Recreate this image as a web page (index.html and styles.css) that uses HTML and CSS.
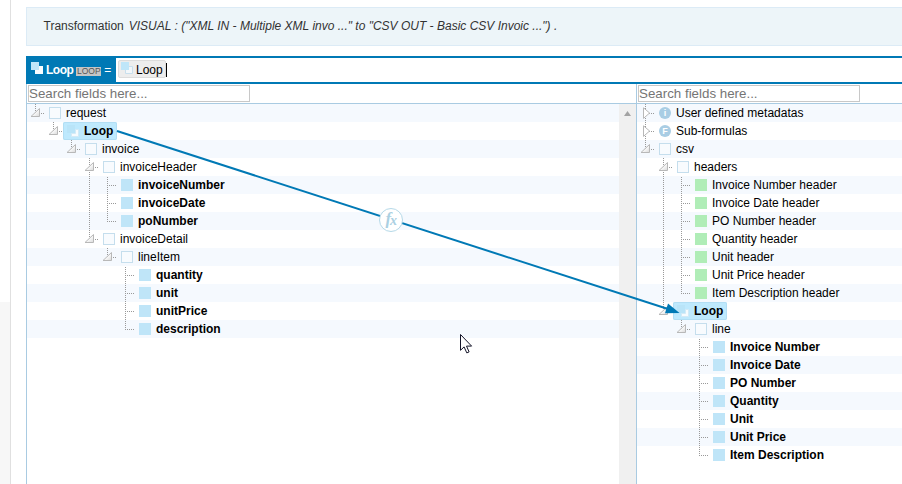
FILE: index.html
```html
<!DOCTYPE html>
<html lang="en">
<head>
<meta charset="utf-8">
<title>Transformation</title>
<link rel="stylesheet" href="styles.css">
</head>
<body>
<svg class="defs" width="0" height="0" aria-hidden="true">
  <defs>
    <linearGradient id="tri" x1="0" y1="0" x2="1" y2="1"><stop offset=".45" stop-color="#fff"/><stop offset="1" stop-color="#d8d8d8"/></linearGradient>
    <symbol id="open" viewBox="0 0 12 12"><path d="M1 9.500 9.500 1.500V9.500Z" fill="url(#tri)" stroke="#b8b8b8"/></symbol>
    <symbol id="closed" viewBox="0 0 12 12"><path d="M3.500 .8 9.600 6 3.500 11.400Z" fill="#fff" stroke="#b8b8b8"/></symbol>
    <symbol id="loop" viewBox="0 0 12 12"><path d="M4 4H12V12H4Z" fill="#fafdff"/><path d="M0 0H8V8H0Z" fill="#bfe6f9"/></symbol>
    <symbol id="loop-outline" viewBox="0 0 12 12"><path d="M4.500 4.500h7v7h-7z" fill="#f3f7fa" stroke="#c8dfed"/><path d="M0 0H8V8H0Z" fill="#bfe6f9"/></symbol>
    <symbol id="loop-soft" viewBox="0 0 12 12"><path d="M8.500 4.500h3v7h-7v-3h4z" fill="#f6fbfe" stroke="#d3eaf6"/><path d="M0 0H8V8H0Z" fill="#b9e4f8"/></symbol>
  </defs>
</svg>
<div class="app">
  <aside class="rail"></aside>
  <main class="main">
    <div class="notice"><span class="notice-label">Transformation</span><em>VISUAL : ("XML IN - Multiple XML invo ..." to "CSV OUT - Basic CSV Invoic ...") .</em></div>
    <div class="formula">
      <div class="target"><svg class="icon"><use href="#loop"/></svg><b>Loop</b><span class="badge">LOOP</span><span class="eq">=</span></div>
      <div class="entry"><span class="token"><svg class="icon"><use href="#loop-outline"/></svg><span>Loop</span></span><i class="caret"></i></div>
    </div>
    <div class="panes">
      <section class="pane source">
        <div class="search"><input type="text" placeholder="Search fields here..."></div>
        <div class="body"><div class="tree" id="source"></div><div class="scroll"><svg width="7" height="5"><path d="M0 5 3.500 0 7 5Z" fill="#a3a3a3"/></svg></div></div>
      </section>
      <section class="pane dest">
        <div class="search"><input type="text" placeholder="Search fields here..."></div>
        <div class="body"><div class="tree" id="dest"></div></div>
      </section>
    </div>
  </main>
</div>
<svg class="overlay" width="902" height="484">
  <path d="M117 131 668 309" stroke="#0079b5" stroke-width="2"/>
  <path d="M679.500 313 665 313.300 668 303.500Z" fill="#0079b5"/>
  <circle cx="391" cy="220" r="11.500" fill="#fff" stroke="#b5d9e8"/>
  <text class="fx" x="385.500" y="224">f</text><text class="fx fx-x" x="390" y="224.500">x</text>
  <path d="M460.500 334.500v15.800l3.600-3.400 2.700 6 2.300-1-2.600-5.800h5.100z" fill="#fff" stroke="#141428"/>
</svg>
<script src="tree.js"></script>
</body>
</html>
```
FILE: styles.css
```css
* { box-sizing: border-box; }
body { margin: 0; background: #fff; color: #000; font: 12px/18px "Liberation Sans", Arial, sans-serif; overflow: hidden; }
.defs { position: absolute; }
.app { display: flex; height: 484px; }
.rail { width: 11px; border-right: 1px solid #e0e0e0; background: linear-gradient(#fff 302px, #f7f7f7 302px); }
.main { flex: 1; min-width: 0; margin-left: 15px; padding-top: 7px; display: flex; flex-direction: column; }
.notice { height: 39px; margin-bottom: 10px; padding: 0 0 2px 16.5px; display: flex; align-items: center; gap: 5px; background: #edf5f9; border: 1px solid #dcebf6; border-right: 0; color: #333; white-space: pre; }
.formula { height: 28px; display: flex; border: solid #0079b5; border-width: 2px 0; flex: none; }
.target { width: 90px; padding-left: 5px; display: flex; align-items: center; background: #0079b5; color: #fff; }
.target b { letter-spacing: -.5px; }
.icon { width: 12px; height: 12px; flex: none; }
.target .icon { margin: -4px 3px 0 0; }
.badge { margin: 3px 3px 0 3px; width: 25px; height: 9px; background: #c5c5c5; color: #555; font-size: 8.5px; line-height: 9px; text-align: center; }
.entry { padding: 2px 0 0 2px; display: flex; }
.token { width: 48px; height: 18px; display: flex; padding: 0 0 0 2px; gap: 3px; background: #ededed; border: 1px solid #dcdcdc; border-radius: 2px; line-height: 18px; }
.token .icon { margin-top: 1px; }
.caret { width: 1px; height: 14px; margin-top: 3px; background: #000; }
.panes { flex: 1; display: flex; }
.pane { display: flex; flex-direction: column; border-left: 1px solid #a9cbe2; }
.source { width: 610px; }
.dest { flex: 1; }
.search { height: 20px; padding: 1px; border-bottom: 1px solid #a9cbe2; display: flex; flex: none; }
.search input { width: 222px; height: 17px; padding: 0; border: 1px solid #c8c8c8; font: 13.333px "Liberation Sans", Arial, sans-serif; }
.search input::placeholder { color: #757575; }
.body { flex: 1; display: flex; }
.tree { flex: 1; }
.scroll { width: 17px; padding: 7px 0 0 5px; background: #f0f0f0; line-height: 0; }
.row { height: 18px; display: flex; }
.row:nth-child(odd) { background: #f5f9fe; }
.guide { width: 18px; height: 18px; flex: none; display: flex; }
.guide svg { display: block; }
.guide path.dots { stroke: #999; stroke-dasharray: 1 1; fill: none; }
.item { height: 18px; display: flex; padding: 0 4px; white-space: nowrap; }
.item.selected { background: #bee9fd; border-radius: 2px; box-shadow: inset 0 0 0 1px #b2def4; }
.mark { width: 12px; height: 12px; margin: 3px 5px 0 0; flex: none; }
.group { border: 1px solid #c5deed; background: #f8fbfe; }
.field { background: #bfe5f8; }
.header { background: #b0edb7; }
.round { border-radius: 50%; background: #a9cde4; color: #fff; font: bold 9px/12px "Liberation Sans", sans-serif; text-align: center; }
.bold { font-weight: bold; }
.overlay { position: absolute; left: 0; top: 0; pointer-events: none; }
.fx { font: italic bold 17px "Liberation Serif", serif; fill: #abd0e2; }
.fx-x { font-size: 14px; }
```
FILE: tree.js
```js
// Each node: [level, kind, label, guide columns that continue through the row, last sibling]
const source = [
  [0, 'group', 'request', [], 1], [1, 'loop', 'Loop', [], 1], [2, 'group', 'invoice', [], 1],
  [3, 'group', 'invoiceHeader', [], 0],
  [4, 'field', 'invoiceNumber', [3], 0], [4, 'field', 'invoiceDate', [3], 0], [4, 'field', 'poNumber', [3], 1],
  [3, 'group', 'invoiceDetail', [], 1], [4, 'group', 'lineItem', [], 1],
  [5, 'field', 'quantity', [], 0], [5, 'field', 'unit', [], 0], [5, 'field', 'unitPrice', [], 0], [5, 'field', 'description', [], 1]
];
const dest = [
  [0, 'info', 'User defined metadatas', [], 0], [0, 'formula', 'Sub-formulas', [], 0], [0, 'group', 'csv', [], 1],
  [1, 'group', 'headers', [], 0],
  ...['Invoice Number', 'Invoice Date', 'PO Number', 'Quantity', 'Unit', 'Unit Price', 'Item Description']
    .map((n, i) => [2, 'header', n + ' header', [1], i === 6 ? 1 : 0]),
  [1, 'loop', 'Loop', [], 1], [2, 'group', 'line', [], 1],
  ...['Invoice Number', 'Invoice Date', 'PO Number', 'Quantity', 'Unit', 'Unit Price', 'Item Description']
    .map((n, i) => [3, 'field', n, [], i === 6 ? 1 : 0])
];

function guide(level, column, kind, through, last) {
  if (column < level) {
    return through.includes(column) ? '<path class="dots" d="M8.5 0V18"/>' : '';
  }
  const leaf = kind === 'field' || kind === 'header';
  const closed = kind === 'info' || kind === 'formula';
  let art = `<path class="dots" d="M8.5 ${leaf ? 1 : 0}V${last ? 10 : 18}"/><path class="dots" d="M8 9.5H17"/>`;
  if (!leaf) {
    art += closed ? '<use href="#closed" x="3" y="3" width="12" height="12"/>'
                  : '<use href="#open" x="3" y="3" width="12" height="12"/>';
  }
  return art;
}

function mark(kind) {
  if (kind === 'loop') return '<svg class="mark"><use href="#loop-soft"/></svg>';
  if (kind === 'info') return '<span class="mark round">i</span>';
  if (kind === 'formula') return '<span class="mark round">F</span>';
  return `<span class="mark ${kind}"></span>`;
}

function render(id, nodes) {
  document.getElementById(id).innerHTML = nodes.map(([level, kind, label, through, last]) => {
    let cells = '';
    for (let c = 0; c <= level; c++) {
      cells += `<span class="guide"><svg width="18" height="18">${guide(level, c, kind, through, last)}</svg></span>`;
    }
    const bold = kind === 'field' || kind === 'loop' ? ' bold' : '';
    const selected = kind === 'loop' ? ' selected' : '';
    return `<div class="row">${cells}<span class="item${bold}${selected}">${mark(kind)}<span>${label}</span></span></div>`;
  }).join('');
}

render('source', source);
render('dest', dest);
```
